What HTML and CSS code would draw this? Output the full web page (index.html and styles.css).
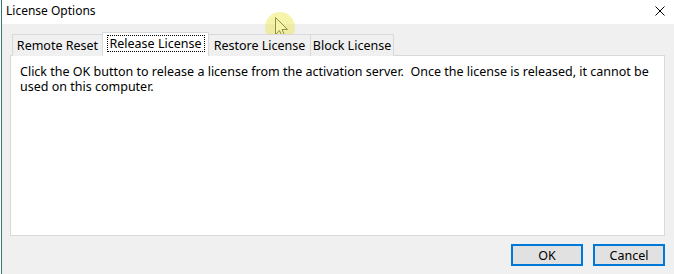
FILE: index.html
```html
<!DOCTYPE html>
<html>
<head>
<meta charset="utf-8">
<title>License Options</title>
<link rel="stylesheet" href="styles.css">
</head>
<body>
<div class="window">
  <div class="titlebar">
    <span class="title">License Options</span>
    <svg class="close" width="10" height="10" viewBox="0 0 10 10"><path d="M0.5 0.5 L9.5 9.5 M9.5 0.5 L0.5 9.5" stroke="#000" stroke-width="1"/></svg>
  </div>
  <div class="client">
    <div class="tabs">
      <div class="tab tab-first">Remote Reset</div>
      <div class="tab tab-selected"><span class="focus">Release License</span></div>
      <div class="tab tab-after">Restore License</div>
      <div class="tab tab-after tab-last">Block License</div>
    </div>
    <div class="panel">
      <p class="message">Click the OK button to release a license from the activation server.&nbsp; Once the license is released, it cannot be used on this computer.</p>
    </div>
    <div class="buttons">
      <button class="btn">OK</button>
      <button class="btn">Cancel</button>
    </div>
  </div>
</div>
<div class="cursor">
  <svg width="34" height="34" viewBox="0 0 34 34">
    <path d="M2.5 1.5 L2.5 18.5 L6.5 14.5 L9.5 21.5 L12 20.5 L9 13.5 L14.5 13.5 Z" fill="#fff" stroke="#4a4a30" stroke-width="1" stroke-linejoin="miter"/>
  </svg>
  <div class="halo"></div>
</div>
</body>
</html>
```
FILE: styles.css
```css
html, body {
  margin: 0;
  padding: 0;
}
body {
  position: relative;
  width: 674px;
  height: 274px;
  overflow: hidden;
  background: #ffffff;
  font-family: "Noto Sans", "DejaVu Sans", sans-serif;
  font-size: 12.5px;
  color: #000;
}
.window {
  margin-left: 1px;
  border-left: 1px solid #2f7d71;
  height: 274px;
  display: flex;
  flex-direction: column;
}
.titlebar {
  height: 24px;
  flex: none;
  background: #ffffff;
  display: flex;
  align-items: center;
  justify-content: space-between;
  padding: 0 9px 0 4px;
}
.title {
  font-size: 12px;
  line-height: 16px;
  margin-top: -2px;
}
.close {
  display: block;
  margin-top: -2px;
}
.client {
  flex: 1;
  background: #f0f0f0;
  padding: 8px 9px 0 8px;
  display: flex;
  flex-direction: column;
}
.tabs {
  display: flex;
  align-items: flex-end;
  height: 24px;
  padding-left: 2px;
  margin-bottom: -1px;
  position: relative;
  z-index: 1;
}
.tab {
  box-sizing: border-box;
  height: 22px;
  border: 1px solid #d9d9d9;
  border-bottom: none;
  background: #f0f0f0;
  display: flex;
  align-items: center;
  justify-content: center;
  white-space: nowrap;
  font-size: 12.5px;
  padding-bottom: 1px;
}
.tab-first {
  width: 90px;
  border-right: none;
}
.tab-selected {
  width: 107px;
  height: 24px;
  background: #ffffff;
  padding-bottom: 3px;
}
.tab-after {
  width: 102px;
  border-left: none;
}
.tab-last {
  width: 83px;
}
.focus {
  border: 1px dotted #000;
  padding: 0 2px;
  line-height: 15px;
}
.panel {
  box-sizing: border-box;
  height: 181px;
  background: #ffffff;
  border: 1px solid #d9d9d9;
  padding: 8px 9px;
}
.message {
  margin: 0;
  font-size: 12.5px;
  line-height: 15px;
}
.buttons {
  display: flex;
  justify-content: flex-end;
  gap: 10px;
  margin-top: 8px;
}
.btn {
  box-sizing: border-box;
  width: 72px;
  height: 22px;
  background: #e1e1e1;
  border: 2px solid #0078d7;
  font-family: "Noto Sans", "DejaVu Sans", sans-serif;
  font-size: 12.5px;
  color: #000;
  padding: 0;
  margin: 0;
}
.cursor {
  position: absolute;
  left: 273px;
  top: 16px;
  width: 34px;
  height: 34px;
}
.cursor svg {
  position: absolute;
  left: 0;
  top: 0;
}
.halo {
  position: absolute;
  left: -8px;
  top: -4px;
  width: 30px;
  height: 30px;
  border-radius: 50%;
  background: rgba(235, 230, 70, 0.45);
}
```
